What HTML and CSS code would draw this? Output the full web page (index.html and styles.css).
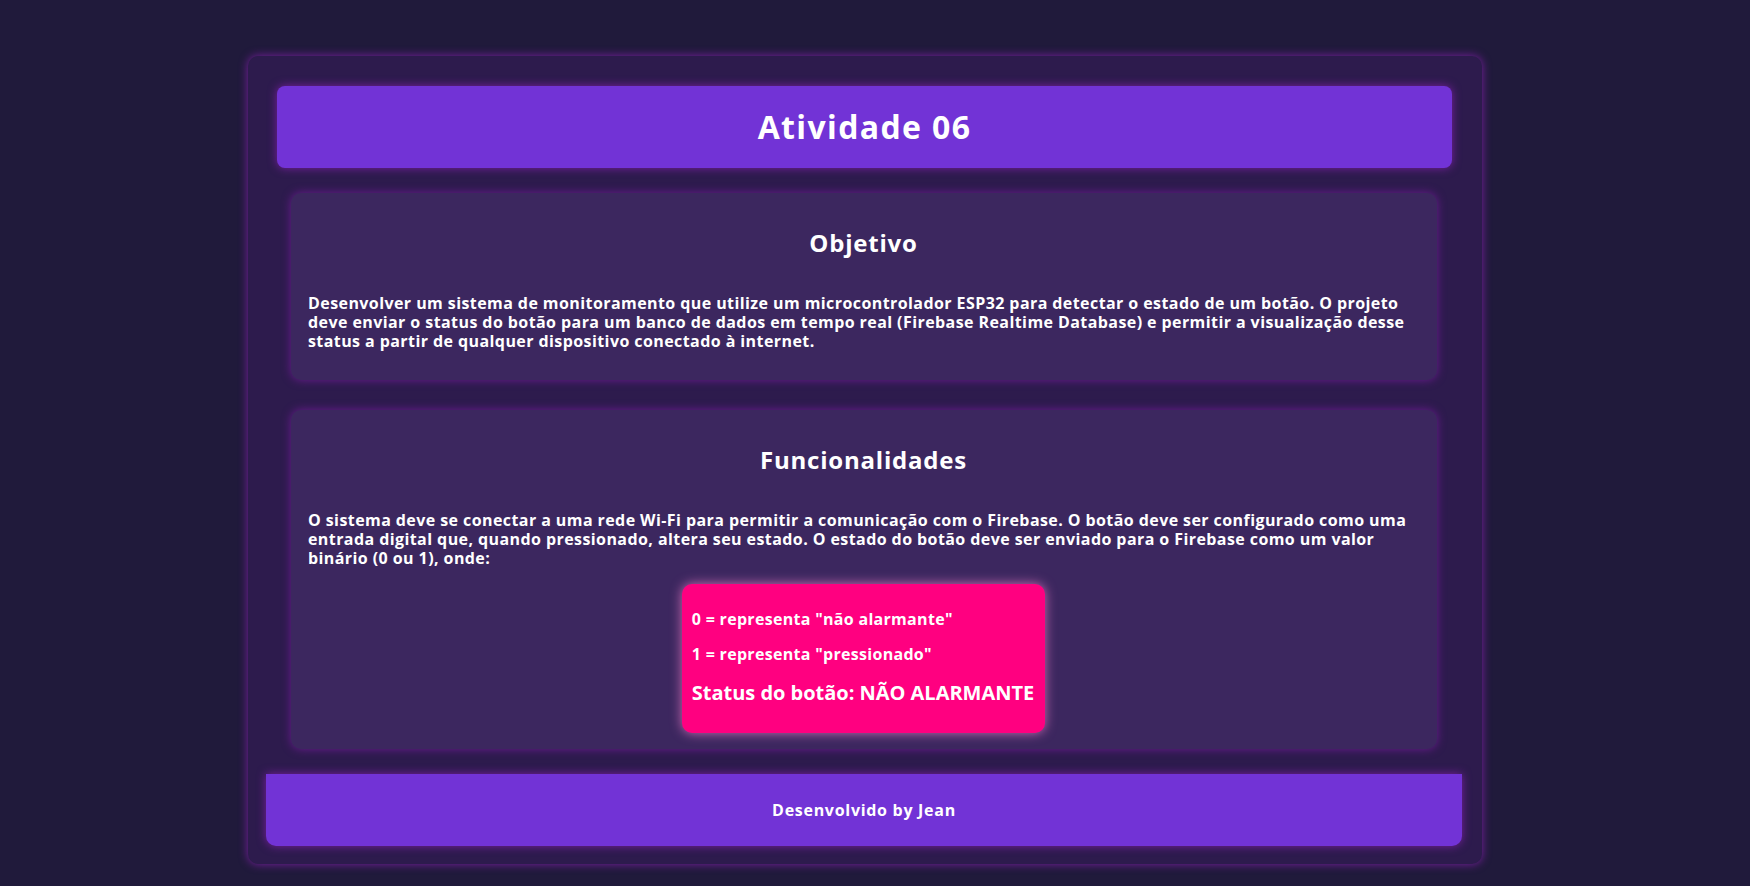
FILE: index.html
```html
<!DOCTYPE html>
<html lang="pt-BR">
<head>
<meta charset="utf-8">
<title>Atividade 06</title>
<link rel="stylesheet" href="styles.css">
</head>
<body>
<div class="container">
  <header class="header">
    <h1 class="title">Atividade 06</h1>
  </header>
  <section class="card card-first">
    <h2 class="card-title">Objetivo</h2>
    <p class="card-text">Desenvolver um sistema de monitoramento que utilize um microcontrolador ESP32 para detectar o estado de um botão. O projeto deve enviar o status do botão para um banco de dados em tempo real (Firebase Realtime Database) e permitir a visualização desse status a partir de qualquer dispositivo conectado à internet.</p>
  </section>
  <section class="card card-second">
    <h2 class="card-title">Funcionalidades</h2>
    <p class="card-text">O sistema deve se conectar a uma rede Wi-Fi para permitir a comunicação com o Firebase. O botão deve ser configurado como uma entrada digital que, quando pressionado, altera seu estado. O estado do botão deve ser enviado para o Firebase como um valor binário (0 ou 1), onde:</p>
    <div class="status-box">
      <p class="status-line">0 = representa "não alarmante"</p>
      <p class="status-line">1 = representa "pressionado"</p>
      <h3 class="status-title">Status do botão: NÃO ALARMANTE</h3>
    </div>
  </section>
  <footer class="footer">
    <p class="footer-text">Desenvolvido by Jean</p>
  </footer>
</div>
</body>
</html>
```
FILE: styles.css
```css
html, body {
  margin: 0;
  padding: 0;
}

body {
  background: #201a3b;
  color: #ffffff;
  font-family: "Open Sans", "Noto Sans", sans-serif;
  font-weight: 750;
}

.container {
  width: 1234px;
  box-sizing: border-box;
  margin: 56px 0 30px 248px;
  padding: 30px 30px 18px 29px;
  background: #2d1b4d;
  border-radius: 10px;
  box-shadow: 0 0 10px #7b1fa2;
}

.header {
  background: #7233d6;
  border-radius: 8px;
  padding: 20px;
  text-align: center;
  box-shadow: 0 0 10px #7b1fa2;
}

.title {
  margin: 0;
  font-size: 32px;
  line-height: 42px;
  font-weight: 750;
  letter-spacing: 1.36px;
}

.card {
  background: #3c275f;
  border-radius: 10px;
  padding: 15px 18px 15px 17px;
  margin: 0 15px 0 14px;
  box-shadow: 0 0 10px #6a1b8f;
}

.card-first {
  margin-top: 25px;
}

.card-second {
  margin-top: 30px;
}

.card-title {
  margin: 20px 0 37px;
  font-size: 24px;
  line-height: 29px;
  font-weight: 750;
  text-align: center;
  letter-spacing: 0.8px;
}

.card-text {
  margin: 0 0 14px;
  font-size: 16px;
  line-height: 19px;
  letter-spacing: 0.42px;
}

.status-box {
  width: fit-content;
  margin: 16px auto 1px;
  padding: 10px 11px 10px 10px;
  background: #ff0080;
  border-radius: 10px;
  box-shadow: 0 0 12px rgba(255, 130, 210, 0.75);
}

.status-line {
  margin: 16px 0;
  font-size: 16px;
  line-height: 19px;
  letter-spacing: 0.3px;
}

.status-title {
  margin: 17px 0 18px;
  font-size: 20px;
  line-height: 24px;
  font-weight: 750;
  letter-spacing: -0.02px;
}

.footer {
  margin: 25px -10px 0 -11px;
  padding: 26px;
  background: #7233d6;
  border-radius: 0 0 10px 10px;
  text-align: center;
  box-shadow: 0 0 10px #7b1fa2;
}

.footer-text {
  margin: 0;
  font-size: 16px;
  line-height: 20px;
  letter-spacing: 0.71px;
}
```
